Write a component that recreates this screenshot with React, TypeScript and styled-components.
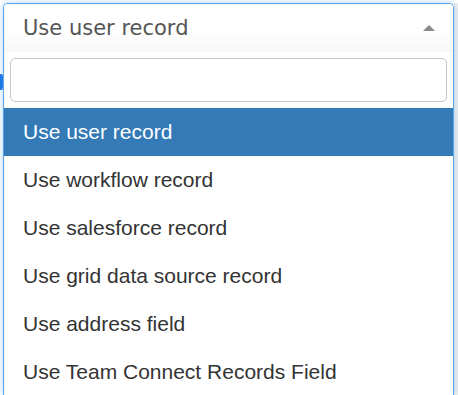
import React from 'react'
import styled, { createGlobalStyle } from 'styled-components'

const GlobalStyle = createGlobalStyle`
  html, body {
    margin: 0;
    padding: 0;
    background: #fff;
    overflow: hidden;
  }
`

const Page = styled.div`
  position: relative;
  display: flex;
  height: 395px;
  padding: 3px 0 0 3px;
  box-sizing: border-box;
  overflow: hidden;
`

// edge of a blue control peeking out from behind the open dropdown
const BehindTab = styled.div`
  position: absolute;
  left: 0;
  top: 74px;
  width: 3px;
  height: 16px;
  background: #1170e4;
  border-radius: 0 2px 2px 0;
`

const Gutter = styled.div`
  margin-left: auto;
  width: 4px;
  background: #eeeeee;
`

const Dropdown = styled.div`
  position: relative;
  width: 451px;
  flex: none;
  box-sizing: border-box;
  border: 1px solid #5ba4ec;
  border-bottom: none;
  border-radius: 5px 5px 0 0;
  box-shadow: 0 0 6px rgba(102, 175, 233, 0.55);
  background: #fff;
`

const Selection = styled.div`
  display: flex;
  align-items: center;
  justify-content: space-between;
  height: 48px;
  padding: 0 18px 0 19px;
  box-sizing: border-box;
  border-radius: 4px 4px 0 0;
  background: linear-gradient(#ffffff 0%, #ffffff 55%, #f7f7f7 100%);
  font-family: 'DejaVu Sans', Verdana, sans-serif;
  font-size: 21px;
  color: #555;
`

const Caret = styled.span`
  width: 0;
  height: 0;
  border-left: 6px solid transparent;
  border-right: 6px solid transparent;
  border-bottom: 6px solid #888;
  margin-bottom: 1px;
`

const SearchWrap = styled.div`
  padding: 6px;
`

const SearchInput = styled.input`
  display: block;
  width: 100%;
  height: 44px;
  box-sizing: border-box;
  border: 1px solid #c8c8c8;
  border-radius: 5px;
  padding: 0 10px;
  outline: none;
  font-family: 'Liberation Sans', Arial, sans-serif;
  font-size: 20px;
`

const Results = styled.ul`
  list-style: none;
  margin: 0;
  padding: 0;
`

const Option = styled.li<{ $active?: boolean }>`
  height: 48px;
  line-height: 47px;
  padding-left: 19px;
  font-family: 'Liberation Sans', Arial, sans-serif;
  font-size: 21px;
  color: ${(p) => (p.$active ? '#fff' : '#333')};
  background: ${(p) => (p.$active ? '#337ab7' : 'transparent')};
  white-space: nowrap;
`

const options = [
  'Use user record',
  'Use workflow record',
  'Use salesforce record',
  'Use grid data source record',
  'Use address field',
  'Use Team Connect Records Field',
]

export default function App() {
  return (
    <>
      <GlobalStyle />
      <Page>
        <BehindTab />
        <Dropdown>
          <Selection>
            <span>Use user record</span>
            <Caret />
          </Selection>
          <SearchWrap>
            <SearchInput type="text" />
          </SearchWrap>
          <Results>
            {options.map((o, i) => (
              <Option key={o} $active={i === 0}>
                {o}
              </Option>
            ))}
          </Results>
        </Dropdown>
        <Gutter />
      </Page>
    </>
  )
}
